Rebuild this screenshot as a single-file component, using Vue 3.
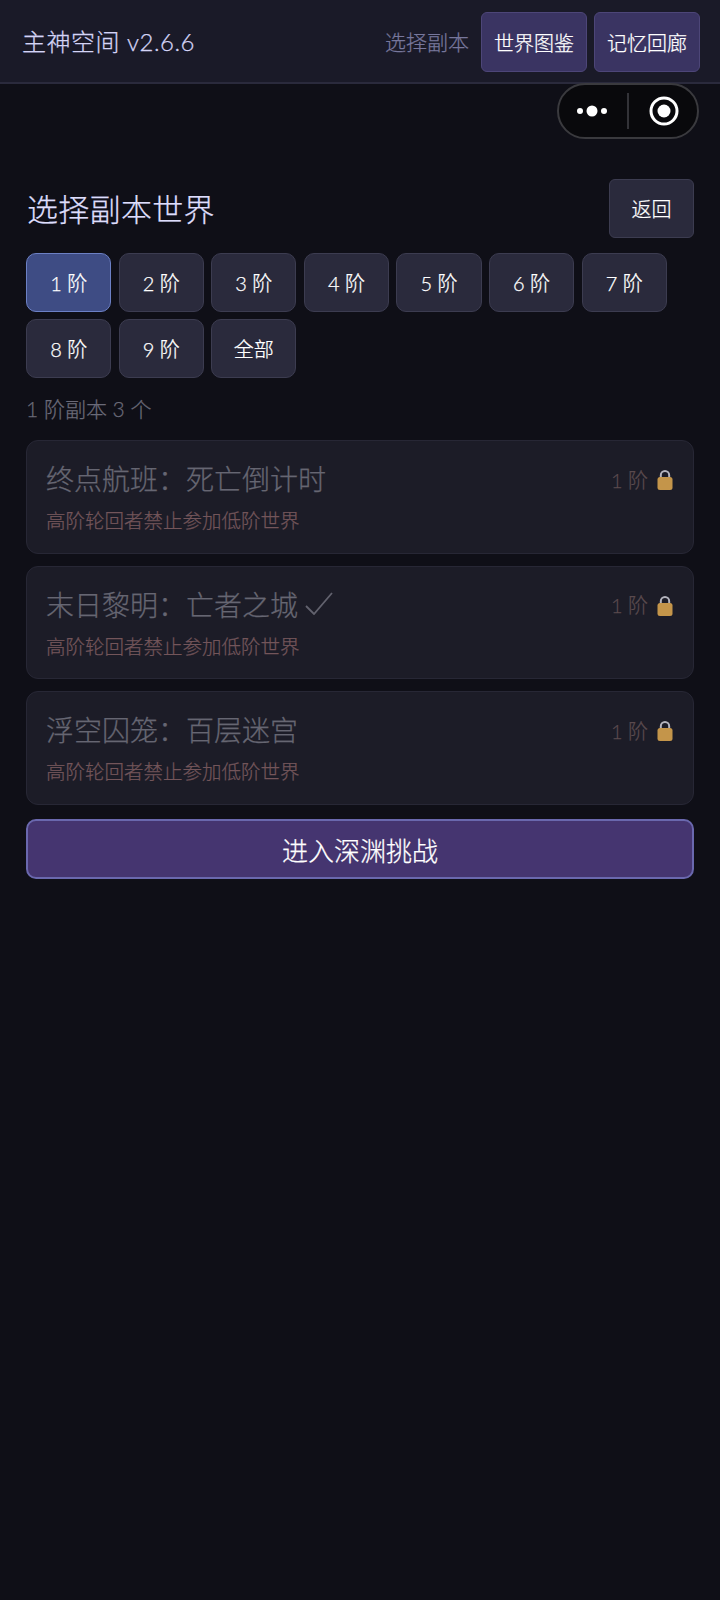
<template>
  <div class="page">
    <header class="topbar">
      <span class="app-title">主神空间 v2.6.6</span>
      <div class="top-right">
        <span class="top-label">选择副本</span>
        <button class="top-btn">世界图鉴</button>
        <button class="top-btn">记忆回廊</button>
      </div>
    </header>

    <div class="capsule">
      <svg class="dots" width="30" height="12" viewBox="0 0 30 12">
        <circle cx="3" cy="6" r="3" fill="#fff" />
        <circle cx="15" cy="6" r="5.5" fill="#fff" />
        <circle cx="27" cy="6" r="3" fill="#fff" />
      </svg>
      <span class="capsule-line"></span>
      <svg class="target" width="30" height="30" viewBox="0 0 30 30">
        <circle cx="15" cy="15" r="13" fill="none" stroke="#fff" stroke-width="3" />
        <circle cx="15" cy="15" r="6.5" fill="#fff" />
      </svg>
    </div>

    <main class="content">
      <div class="head-row">
        <h2 class="page-title">选择副本世界</h2>
        <button class="back-btn">返回</button>
      </div>

      <div class="tiers">
        <button
          v-for="t in tiers"
          :key="t"
          class="tier-btn"
          :class="{ active: t === '1 阶' }"
        >
          {{ t }}
        </button>
      </div>

      <div class="count">1 阶副本 3 个</div>

      <div class="world-list">
        <div v-for="w in worlds" :key="w.name" class="world-card">
          <div class="world-top">
            <span class="world-name">
              {{ w.name }}
              <svg v-if="w.done" class="done" width="28" height="23" viewBox="0 0 28 23">
                <path d="M1 14l8 8L27 1" fill="none" stroke="#62626e" stroke-width="1.8" />
              </svg>
            </span>
            <span class="world-tier">1 阶</span>
            <svg class="lock" width="16" height="20" viewBox="0 0 16 20">
              <path d="M3.8 9V5.2a4.2 4.2 0 0 1 8.4 0V9" fill="none" stroke="#b4b4be" stroke-width="2" />
              <rect x="0.5" y="7" width="15" height="13" rx="2.5" fill="#c4954a" />
            </svg>
          </div>
          <div class="world-desc">高阶轮回者禁止参加低阶世界</div>
        </div>
      </div>

      <button class="abyss-btn">进入深渊挑战</button>
    </main>
  </div>
</template>

<script setup>
const tiers = ['1 阶', '2 阶', '3 阶', '4 阶', '5 阶', '6 阶', '7 阶', '8 阶', '9 阶', '全部']

const worlds = [
  { name: '终点航班：死亡倒计时', done: false },
  { name: '末日黎明：亡者之城', done: true },
  { name: '浮空囚笼：百层迷宫', done: false }
]
</script>

<style>
html, body { margin: 0; background: #0f0f17; }
</style>

<style scoped>
.page {
  position: relative;
  min-height: 1600px;
  background: #0f0f17;
  font-family: "Lato", "Noto Sans CJK SC", sans-serif;
  font-weight: 300;
  -webkit-text-stroke: 0.25px;
  color: #fff;
}
button { font-family: inherit; font-weight: 300; cursor: pointer; padding: 0; }

.topbar {
  box-sizing: border-box;
  height: 84px;
  padding: 2px 20px 0 22px;
  display: flex;
  align-items: center;
  justify-content: space-between;
  background: #1a1a28;
  border-bottom: 2px solid #2a2a3c;
}
.app-title { margin-bottom: 4px; font-size: 24px; color: #d4d4f6; letter-spacing: 0.5px; }
.top-right { display: flex; align-items: center; gap: 7px; }
.top-label { margin: 0 5px 3px 0; font-size: 21px; color: #77779c; }
.top-btn {
  width: 106px;
  height: 60px;
  font-size: 20px;
  color: #fff;
  background: #3a3462;
  border: 1.5px solid #4d4678;
  border-radius: 6px;
}

.capsule {
  position: absolute;
  top: 83px;
  left: 557px;
  box-sizing: border-box;
  width: 142px;
  height: 56px;
  display: flex;
  align-items: center;
  background: #09090c;
  border: 2px solid #3a3a3e;
  border-radius: 28px;
}
.dots { margin-left: 18px; }
.capsule-line { width: 2px; height: 36px; margin: 0 20px; background: #333338; }

.content { padding: 95px 26px 0; }
.head-row { display: flex; align-items: center; justify-content: space-between; height: 59px; }
.page-title { margin: 0 0 3px 1px; font-size: 31px; font-weight: 300; letter-spacing: 0.3px; color: #dedefc; }
.back-btn {
  width: 85px;
  height: 59px;
  font-size: 20px;
  color: #fff;
  background: #2a2a3c;
  border: 1.5px solid #3c3c50;
  border-radius: 6px;
}

.tiers { display: flex; flex-wrap: wrap; gap: 7px 7.3px; margin-top: 15px; }
.tier-btn {
  width: 85.3px;
  height: 59px;
  font-size: 20px;
  color: #fff;
  background: #2a2a3c;
  border: 1.5px solid #3c3c50;
  border-radius: 10px;
}
.tier-btn.active { background: #3e4c84; border-color: #6c80c4; }

.count { margin-top: 15.5px; font-size: 21px; line-height: 30px; color: #6a6a78; }

.world-list { display: flex; flex-direction: column; gap: 12px; margin-top: 16.5px; }
.world-card {
  box-sizing: border-box;
  height: 113.5px;
  padding: 17px 20px 0 19px;
  background: #1c1c27;
  border: 1.5px solid #272735;
  border-radius: 12px;
}
.world-top { display: flex; align-items: center; }
.world-name { display: flex; align-items: center; flex: 1; font-size: 28px; color: #666672; }
.done { margin-left: 7px; }
.world-tier { margin: 2px 9px 0 0; font-size: 20px; color: #5a4a4e; }
.lock { margin-top: 4px; }
.world-desc { margin-top: 7px; font-size: 19.5px; color: #73555a; }

.abyss-btn {
  display: block;
  box-sizing: border-box;
  width: 100%;
  height: 60px;
  margin-top: 14.5px;
  font-size: 26px;
  color: #fff;
  background: #453570;
  border: 2px solid #6a68ae;
  border-radius: 10px;
}
</style>
